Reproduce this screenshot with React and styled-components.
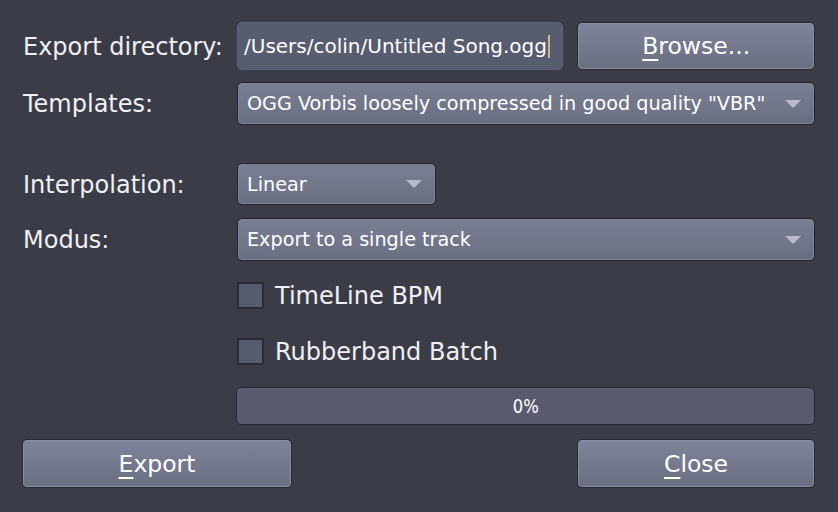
import React from "react";
import styled, { createGlobalStyle } from "styled-components";

const Global = createGlobalStyle`
  html, body { margin: 0; padding: 0; background: #3a3d48; }
  body { font-family: "DejaVu Sans", "Liberation Sans", sans-serif; color: #f2f2f4; }
  #root { width: 838px; height: 512px; }
`;

const Dialog = styled.div`
  box-sizing: border-box;
  width: 838px;
  height: 512px;
  padding: 22px 23px 0 22px;
  display: flex;
  flex-direction: column;
  background: #3a3d48;
`;

const Row = styled.div`
  display: flex;
  align-items: center;
  height: ${(p) => p.$h}px;
  margin-top: ${(p) => p.$mt || 0}px;
  justify-content: ${(p) => p.$justify || "flex-start"};
`;

const Label = styled.div`
  width: 214px;
  flex: none;
  font-size: 24px;
  padding-left: 1px;
  padding-top: 1px;
  color: #f0f0f2;
  white-space: nowrap;
`;

const LineEdit = styled.div`
  box-sizing: border-box;
  width: 327px;
  height: 100%;
  display: flex;
  align-items: center;
  padding-left: 6px;
  background: #585c6f;
  border: 1px solid #5f6377;
  border-radius: 5px;
  font-size: 20px;
  color: #ffffff;
  white-space: nowrap;
  overflow: hidden;
`;

const Caret = styled.span`
  display: inline-block;
  width: 0;
  height: 23px;
  border-left: 2px solid #c9b893;
  margin-left: 1px;
`;

const Button = styled.div`
  box-sizing: border-box;
  width: ${(p) => p.$w}px;
  margin-left: ${(p) => p.$ml || 0}px;
  height: 100%;
  display: flex;
  align-items: center;
  justify-content: center;
  border: 1px solid #272930;
  border-radius: 5px;
  box-shadow: inset 0 0 0 1px #8a8ea1;
  background: linear-gradient(#80849a, #6a6e81);
  font-size: 23.5px;
  color: #ffffff;
  u {
    text-decoration-thickness: 1.5px;
    text-underline-offset: 5px;
  }
`;

const Combo = styled.div`
  box-sizing: border-box;
  width: ${(p) => (p.$w ? `${p.$w}px` : "auto")};
  flex: ${(p) => (p.$w ? "none" : "1")};
  height: 100%;
  display: flex;
  align-items: center;
  justify-content: space-between;
  padding: 0 13px 0 9px;
  border: 1px solid #23252c;
  border-radius: 5px;
  box-shadow: inset 0 0 0 1px #7e8295;
  background: linear-gradient(#7b7f93, #6a6e81);
  font-size: 19.2px;
  color: #ffffff;
  white-space: nowrap;
`;

const Arrow = styled.span`
  width: 0;
  height: 0;
  border-left: 8px solid transparent;
  border-right: 8px solid transparent;
  border-top: 8px solid #b9bbc6;
  flex: none;
`;

const CheckRow = styled.label`
  display: flex;
  align-items: center;
  margin-left: 214px;
  margin-top: ${(p) => p.$mt}px;
  height: 27px;
  gap: 11px;
  font-size: 24px;
  color: #f0f0f2;
`;

const Box = styled.span`
  box-sizing: border-box;
  width: 27px;
  height: 27px;
  margin-left: 1px;
  background: #575b6e;
  border: 2px solid #2a2c34;
  border-radius: 2px;
  flex: none;
`;

const Progress = styled.div`
  box-sizing: border-box;
  margin-left: 214px;
  margin-top: 22px;
  height: 38px;
  display: flex;
  align-items: center;
  justify-content: center;
  background: #575b6d;
  border: 1px solid #25272e;
  border-radius: 5px;
  color: #ffffff;
`;

const ProgressText = styled.span`
  display: inline-block;
  font-size: 20px;
  transform: scaleX(0.82);
`;

export default function App() {
  return (
    <>
      <Global />
      <Dialog>
        <Row $h={48}>
          <Label>Export directory:</Label>
          <LineEdit>
            /Users/colin/Untitled Song.ogg
            <Caret />
          </LineEdit>
          <Button $w={238} $ml={14}>
            <span>
              <u>B</u>rowse...
            </span>
          </Button>
        </Row>
        <Row $h={43} $mt={12}>
          <Label>Templates:</Label>
          <Combo>
            <span>OGG Vorbis loosely compressed in good quality "VBR"</span>
            <Arrow />
          </Combo>
        </Row>
        <Row $h={42} $mt={38}>
          <Label>Interpolation:</Label>
          <Combo $w={199}>
            <span>Linear</span>
            <Arrow />
          </Combo>
        </Row>
        <Row $h={43} $mt={13}>
          <Label>Modus:</Label>
          <Combo>
            <span>Export to a single track</span>
            <Arrow />
          </Combo>
        </Row>
        <CheckRow $mt={21}>
          <Box />
          TimeLine BPM
        </CheckRow>
        <CheckRow $mt={29}>
          <Box />
          Rubberband Batch
        </CheckRow>
        <Progress>
          <ProgressText>0%</ProgressText>
        </Progress>
        <Row $h={49} $mt={14} $justify="space-between">
          <Button $w={270}>
            <span>
              <u>E</u>xport
            </span>
          </Button>
          <Button $w={238}>
            <span>
              <u>C</u>lose
            </span>
          </Button>
        </Row>
      </Dialog>
    </>
  );
}
